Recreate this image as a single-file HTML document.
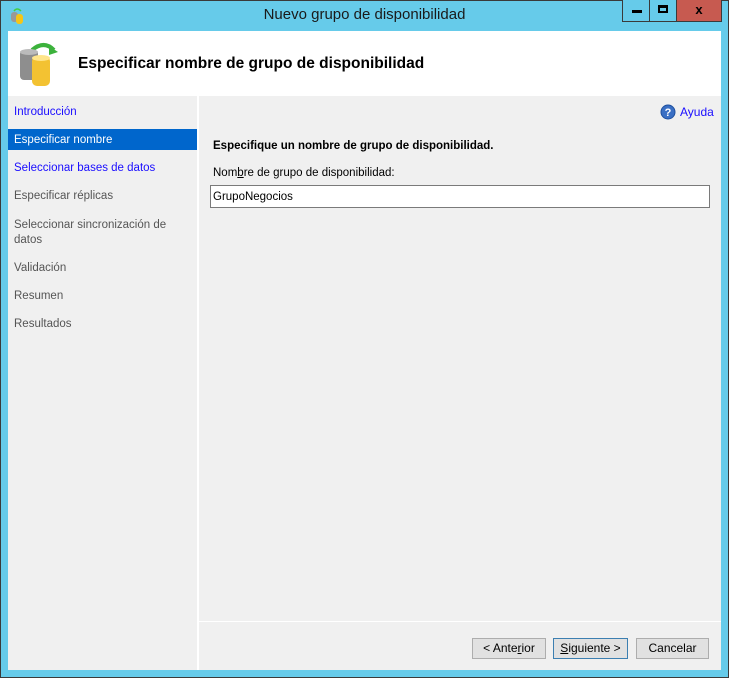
<!DOCTYPE html>
<html><head><meta charset="utf-8"><style>
*{margin:0;padding:0;box-sizing:border-box}
body{width:729px;height:678px;background:#66cbea;font-family:"Liberation Sans",sans-serif;font-size:12px;position:relative;overflow:hidden}
.frame{position:absolute;left:0;top:0;width:729px;height:678px;border:1px solid #3a3a3a}
.abs{position:absolute}
.title{left:0;width:729px;top:6px;text-align:center;font-size:15px;color:#1a1a1a}
.btn{position:absolute;top:0;height:22px;border:1px solid #3a3a3a;border-top:none}
.left{left:8px;top:96px;width:189px;height:574px;background:#f0f0f0}
.right{left:199px;top:96px;width:522px;height:574px;background:#f0f0f0}
.nav{position:absolute;left:14px;font-size:11.5px}
.sel{left:8px;top:129px;width:189px;height:21px;background:#0066cc}
.pb{position:absolute;top:638px;height:21px;background:#e1e1e1;border:1px solid #adadad;text-align:center;line-height:19px;font-size:12px;color:#000}
</style></head><body>
<div class="frame"></div>
<div class="abs title">Nuevo grupo de disponibilidad</div>
<svg class="abs" style="left:10px;top:6px" width="16" height="18"><rect x="1" y="6" width="7" height="10" rx="3" fill="#999"/><rect x="6" y="8" width="7" height="10" rx="3" fill="#f5c518"/><path d="M4 5 Q7 1 11 5" stroke="#4c4" fill="none" stroke-width="1.5"/></svg>
<div class="btn" style="left:622px;width:28px;background:#66cbea"><div class="abs" style="left:9px;top:10px;width:10px;height:3px;background:#000"></div></div>
<div class="btn" style="left:650px;width:27px;background:#66cbea;border-left:none"><div class="abs" style="left:8px;top:5px;width:10px;height:8px;border:2px solid #000;border-top-width:3px"></div></div>
<div class="btn" style="left:677px;width:45px;background:#c75a50;border-left:none;text-align:center;font-weight:bold;font-size:13px;line-height:20px">x</div>
<div class="abs" style="left:8px;top:31px;width:713px;height:639px;background:#fff"></div>
<svg class="abs" style="left:18px;top:40px" width="44" height="46"><path d="M14 10 Q26 0 36 10" stroke="#3cb23c" stroke-width="4" fill="none"/><path d="M31 6 L40 12 L31 15Z" fill="#3cb23c"/><rect x="2" y="10" width="18" height="30" rx="4" fill="#8e8e8e"/><ellipse cx="11" cy="12" rx="9" ry="3" fill="#bbb"/><rect x="14" y="16" width="18" height="30" rx="5" fill="#f3c232"/><ellipse cx="23" cy="18" rx="9" ry="3" fill="#ffe58a"/></svg>
<div class="abs" style="left:78px;top:55px;font-size:15.5px;font-weight:bold;color:#000">Especificar nombre de grupo de disponibilidad</div>
<div class="abs left"></div>
<div class="abs right"></div>
<div class="abs sel"></div>
<div class="nav" style="top:106px;color:#1a0dff">Introducción</div>
<div class="nav" style="top:134px;color:#fff">Especificar nombre</div>
<div class="nav" style="top:162px;color:#1a0dff">Seleccionar bases de datos</div>
<div class="nav" style="top:190px;color:#555">Especificar réplicas</div>
<div class="nav" style="top:218px;color:#555;line-height:15px">Seleccionar sincronización de<br>datos</div>
<div class="nav" style="top:262px;color:#555">Validación</div>
<div class="nav" style="top:290px;color:#555">Resumen</div>
<div class="nav" style="top:318px;color:#555">Resultados</div>
<svg class="abs" style="left:660px;top:104px" width="16" height="16"><circle cx="8" cy="8" r="7" fill="#3a6fc4" stroke="#1d4f9e"/><text x="8" y="12" font-size="11" font-weight="bold" fill="#fff" text-anchor="middle" font-family="Liberation Sans">?</text></svg>
<div class="abs" style="left:680px;top:105px;color:#1a0dff">Ayuda</div>
<div class="abs" style="left:213px;top:140px;font-weight:bold;color:#000;font-size:11.5px">Especifique un nombre de grupo de disponibilidad.</div>
<div class="abs" style="left:213px;top:167px;color:#000;font-size:11.5px">Nom<u>b</u>re de grupo de disponibilidad:</div>
<div class="abs" style="left:210px;top:185px;width:500px;height:23px;background:#fff;border:1px solid #7a7a7a;padding:5px 2px;color:#000;font-size:11.5px">GrupoNegocios</div>
<div class="abs" style="left:199px;top:621px;width:522px;height:1px;background:#fff"></div>
<div class="pb" style="left:472px;width:74px">&lt; Ante<u>r</u>ior</div>
<div class="pb" style="left:553px;width:75px;border-color:#3c7fb1"><u>S</u>iguiente &gt;</div>
<div class="pb" style="left:636px;width:73px">Cancelar</div>
</body></html>
